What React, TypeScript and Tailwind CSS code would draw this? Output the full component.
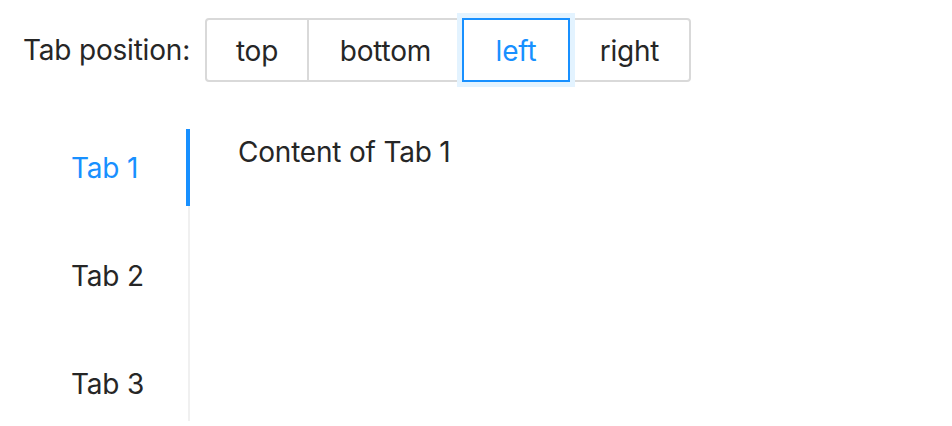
import { useState } from "react";

const positions = [
  { key: "top", width: "w-[104px]" },
  { key: "bottom", width: "w-[157px]" },
  { key: "left", width: "w-[108px]" },
  { key: "right", width: "w-[123px]" },
];

const tabs = ["Tab 1", "Tab 2", "Tab 3"];

export default function App() {
  const [position, setPosition] = useState("left");
  const [active, setActive] = useState(0);

  return (
    <div
      className="min-h-screen bg-white pl-[23px] pt-[18px] text-[28px] text-[#262626] tracking-[-0.2px]"
      style={{ fontFamily: "Inter, 'Noto Sans', sans-serif" }}
    >
      <div className="flex items-center">
        <span className="w-[182px] whitespace-nowrap leading-[44px]">Tab position:</span>
        <div className="flex">
          {positions.map((p, i) => {
            const checked = p.key === position;
            return (
              <button
                key={p.key}
                type="button"
                onClick={() => setPosition(p.key)}
                className={
                  "relative flex h-[64px] items-center justify-center whitespace-nowrap border-2 bg-white pt-[2px] leading-[58px] " +
                  p.width +
                  (i > 0 ? " -ml-[2px]" : "") +
                  (i === 0 ? " rounded-l-[4px]" : "") +
                  (i === positions.length - 1 ? " rounded-r-[4px]" : "") +
                  (checked
                    ? " z-10 border-[#1890ff] text-[#1890ff] shadow-[0_0_0_5px_#e3f3ff]"
                    : " border-[#d9d9d9] text-[#262626]")
                }
              >
                {p.key}
              </button>
            );
          })}
        </div>
      </div>

      <div className="mt-[47px] flex">
        <div className="relative flex w-[167px] shrink-0 flex-col gap-[32px] border-r-2 border-[#f0f0f0]">
          {tabs.map((t, i) => (
            <button
              key={t}
              type="button"
              onClick={() => setActive(i)}
              className={
                "relative whitespace-nowrap px-[48px] pb-[15px] pt-[17px] text-left leading-[44px] " +
                (i === active ? "text-[#1890ff]" : "text-[#262626]")
              }
            >
              {t}
              {i === active && (
                <span className="absolute -right-[2px] top-0 h-[77px] w-[4px] bg-[#1890ff]" />
              )}
            </button>
          ))}
        </div>
        <div className="whitespace-nowrap pl-[48px] pt-[1px] leading-[44px]">Content of {tabs[active]}</div>
      </div>
    </div>
  );
}
